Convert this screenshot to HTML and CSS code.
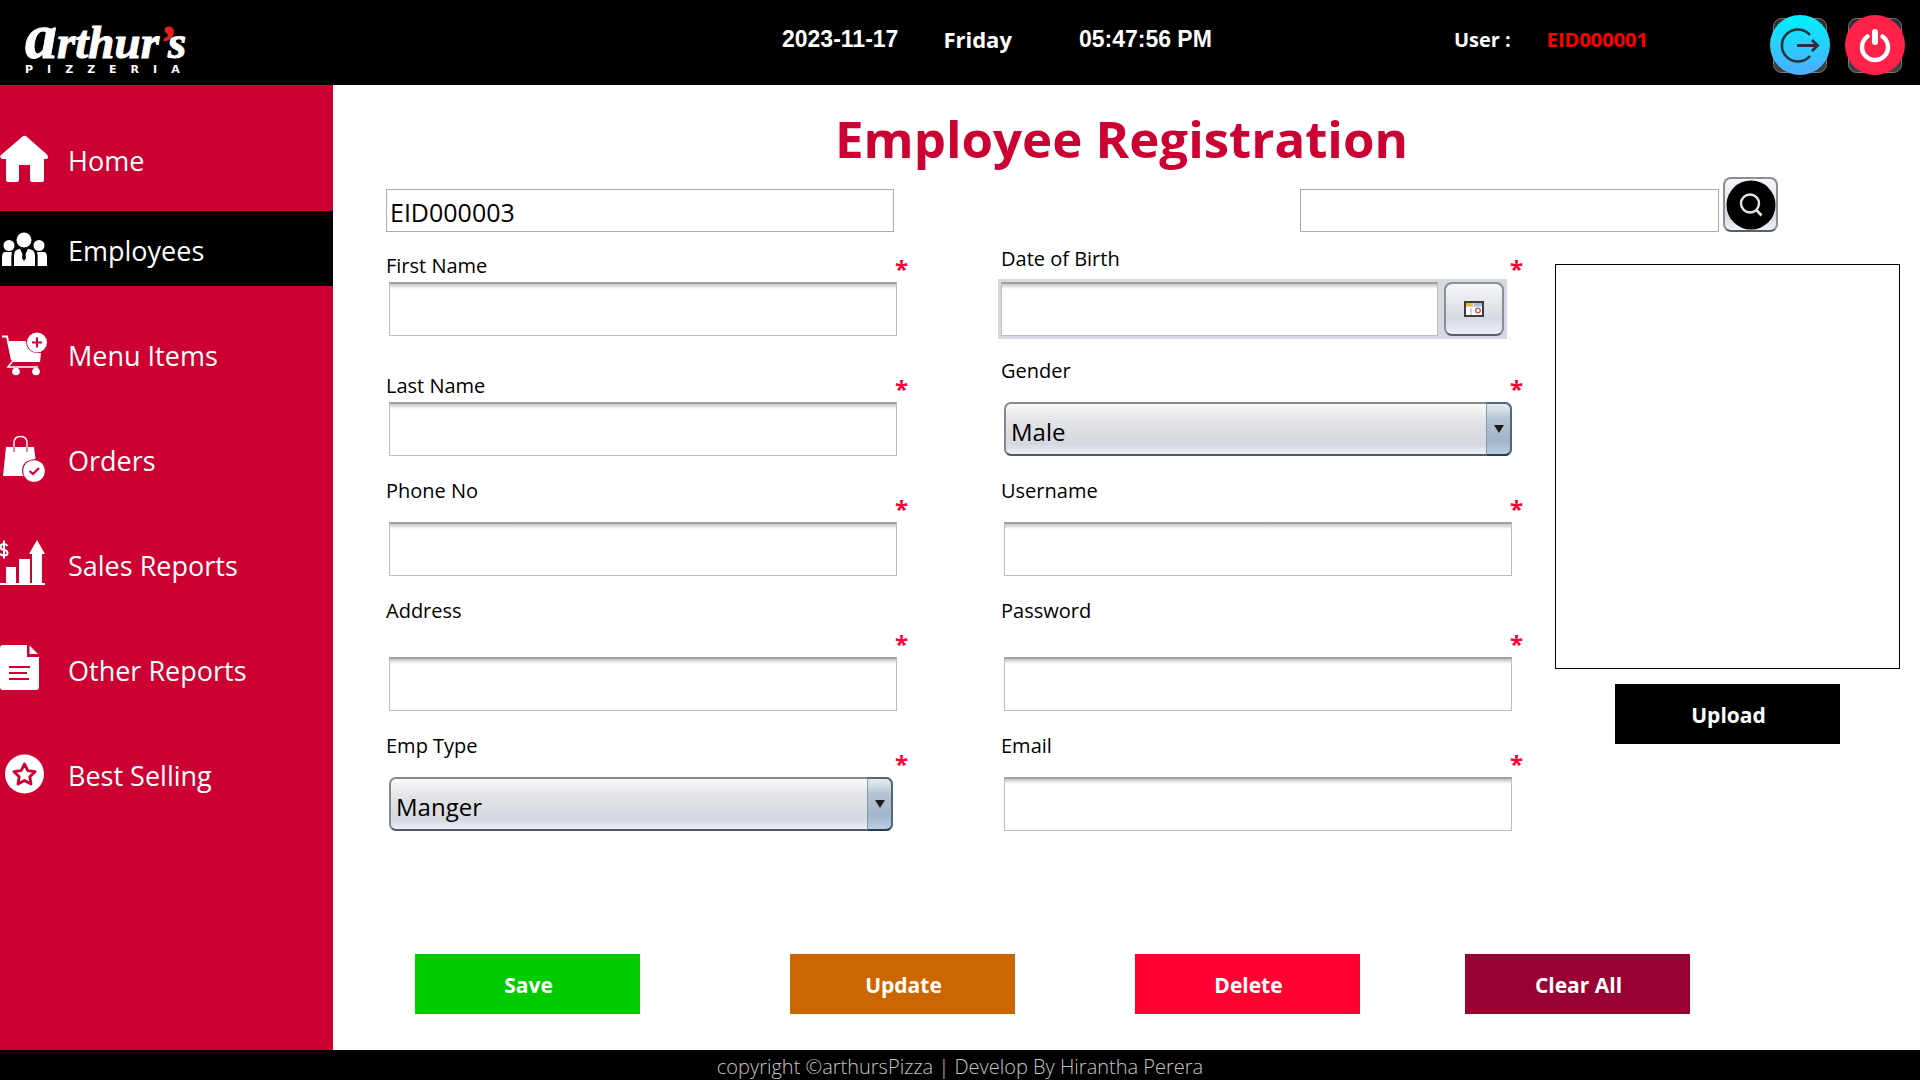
FILE: index.html
```html
<!DOCTYPE html>
<html lang="en">
<head>
<meta charset="utf-8">
<meta name="viewport" content="width=device-width, initial-scale=1">
<title>Arthur's Pizzeria - Employee Registration</title>
<link rel="stylesheet" href="styles.css">
</head>
<body>
<header class="topbar">
  <div class="logo">
    <div class="logo-name"><span class="logo-initial">a</span>rthur<span class="logo-mark">’</span>s</div>
    <div class="logo-sub">PIZZERIA</div>
  </div>
  <div class="clock">
    <span class="date">2023-11-17</span>
    <span class="day">Friday</span>
    <span class="time">05:47:56 PM</span>
  </div>
  <div class="user"><span>User :</span><span class="user-id">EID000001</span></div>
  <div class="session">
    <button class="round-btn" type="button" aria-label="Log out">
      <svg viewBox="0 0 60 60" width="60" height="60">
        <defs>
          <linearGradient id="sky" x1="0" y1="0" x2="0" y2="1"><stop offset="0" stop-color="#00f2fe"/><stop offset="1" stop-color="#4facfe"/></linearGradient>
          <linearGradient id="frame" x1="0" y1="0" x2="0" y2="1"><stop offset="0" stop-color="#2c2e31"/><stop offset="1" stop-color="#3f4144"/></linearGradient>
        </defs>
        <rect x="3.500" y="3.500" width="53" height="54" rx="8" fill="url(#frame)" stroke="#77797c"/>
        <circle cx="30" cy="30" r="30" fill="url(#sky)"/>
        <path d="M40 20A16 16 0 1 0 40 41" fill="none" stroke="#263238" stroke-width="2.600"/>
        <path d="M27 30.500H47M42 25l5.500 5.500L42 36" fill="none" stroke="#263238" stroke-width="2.800"/>
      </svg>
    </button>
    <button class="round-btn" type="button" aria-label="Exit">
      <svg viewBox="0 0 60 60" width="60" height="60">
        <rect x="3.500" y="3.500" width="53" height="54" rx="8" fill="url(#frame)" stroke="#77797c"/>
        <circle cx="30" cy="30" r="30" fill="#ff2147"/>
        <path d="M22.500 21.500A13 13 0 1 0 37.500 21.500" fill="none" stroke="#fff" stroke-width="4.500" stroke-linecap="round"/>
        <path d="M30 17V27" stroke="#fff" stroke-width="6" stroke-linecap="round"/>
      </svg>
    </button>
  </div>
</header>

<div class="layout">
  <nav class="sidebar">
    <a class="nav-item" href="#home">
      <svg viewBox="0 0 48 48" width="48" height="48" fill="#fff"><path d="M22.500 1.500Q24.500 0 26.500 1.500L47 19.500Q49 22 47 24H44V45Q44 47 42 47H32Q30 47 30 45V30H19V45Q19 47 17 47H8Q6 47 6 45V24H2Q-1 22 1 20Z"/></svg>
      <span>Home</span>
    </a>
    <a class="nav-item nav-active" href="#employees">
      <svg viewBox="0 0 48 48" width="48" height="48" fill="#fff"><circle cx="24" cy="15" r="7.500"/><circle cx="9" cy="20.500" r="5.500"/><circle cx="39" cy="20.500" r="5.500"/><path d="M14 41V31Q14 24 20 24L24 32L28 24Q35 24 35 31V41ZM2 41V33Q2 27 5 27H12Q11 30 11.500 41ZM47 41V33Q47 27 44 27H37Q38 30 37.500 41Z"/><path d="M23 25h2l1 8l-2 3l-2-3Z" fill="#000"/></svg>
      <span>Employees</span>
    </a>
    <a class="nav-item" href="#menu">
      <svg viewBox="0 0 48 48" width="48" height="48" fill="#fff"><path d="M2 6.500H7L12 30" fill="none" stroke="#fff" stroke-width="2"/><path d="M8 11H26Q26 21 36 23H41L40 32H12Z"/><path d="M12 32L8 37H38" fill="none" stroke="#fff" stroke-width="1.500"/><circle cx="16" cy="41.500" r="3.800"/><circle cx="36" cy="41.500" r="3.800"/><circle cx="37" cy="12.500" r="10"/><path d="M37 7.500V17.500M32 12.500H42" stroke="#cc0033" stroke-width="2"/></svg>
      <span>Menu Items</span>
    </a>
    <a class="nav-item" href="#orders">
      <svg viewBox="0 0 48 48" width="48" height="48" fill="#fff"><path d="M6 12H34L35.500 24Q22 25 22 36Q22 39 23.500 41H3Z"/><path d="M14 16V8Q14 1.500 20.500 1.500Q27 1.500 27 8V16" fill="none" stroke="#fff" stroke-width="1.500"/><path d="M14 12V17M27 12V17" stroke="#cc0033" stroke-width="1"/><circle cx="34" cy="36" r="10.800"/><path d="M29.500 36L33 39L39 33" fill="none" stroke="#cc0033" stroke-width="2.200"/></svg>
      <span>Orders</span>
    </a>
    <a class="nav-item" href="#sales">
      <svg viewBox="0 0 48 48" width="48" height="48" fill="#fff"><path d="M0 43H45V45H0ZM6 27H16V43H6ZM19 19H30V43H19ZM32 14H29L37 0L45 14H42V43H32Z"/><path d="M7.500 6Q6.500 4 4 4Q0.500 4 0.500 6.800Q0.500 9.500 4 10Q7.500 10.500 7.500 13Q7.500 15.500 4 15.500Q1 15.500 0 13.500M4 0.500V18.500" fill="none" stroke="#fff" stroke-width="2"/></svg>
      <span>Sales Reports</span>
    </a>
    <a class="nav-item" href="#other">
      <svg viewBox="0 0 48 48" width="48" height="48" fill="#fff"><path d="M3 0H27V12H39V42Q39 45 36 45H3Q0 45 0 42V3Q0 0 3 0Z"/><path d="M29.500 0.500L38 9H29.500Z"/><path d="M9 22H30M9 28H27M9 34H29" stroke="#cc0033" stroke-width="2"/></svg>
      <span>Other Reports</span>
    </a>
    <a class="nav-item" href="#best">
      <svg viewBox="0 0 48 48" width="48" height="48" fill="#fff"><circle cx="24.500" cy="24" r="19.500"/><path d="M24.500 14L27.800 20.600L35 21.700L29.800 26.700L31 34L24.500 30.500L18 34L19.200 26.700L14 21.700L21.200 20.600Z" fill="#fff" stroke="#cc0033" stroke-width="2.800" stroke-linejoin="round"/></svg>
      <span>Best Selling</span>
    </a>
  </nav>

  <main class="content">
    <h1 class="title">Employee Registration</h1>

    <div class="lookup">
      <input class="plain-input id-input" type="text" value="EID000003" aria-label="Employee ID">
      <div class="search">
        <input class="plain-input search-input" type="text" aria-label="Search employee">
        <button class="soft-btn search-btn" type="button" aria-label="Search">
          <svg viewBox="0 0 50 50" width="50" height="50"><circle cx="25" cy="25" r="24.500" fill="#000"/><circle cx="24" cy="23.500" r="9" fill="none" stroke="#e4e5ea" stroke-width="2.400"/><path d="M30 29.500L35.500 35.500" stroke="#e4e5ea" stroke-width="2.600"/></svg>
        </button>
      </div>
    </div>

    <div class="workspace">
      <form class="fields" id="employee">
        <div class="field">
          <div class="head"><label class="low" for="first">First Name</label><span class="star">*</span></div>
          <input class="control" id="first" type="text">
        </div>
        <div class="field">
          <div class="head"><label class="middle" for="dob">Date of Birth</label><span class="star">*</span></div>
          <div class="date-picker">
            <input class="control" id="dob" type="text">
            <button class="soft-btn calendar-btn" type="button" aria-label="Choose date">
              <svg viewBox="0 0 20 16" width="20" height="16"><rect x="1" y="1" width="18" height="14" fill="#fff" stroke="#3c3c3c" stroke-width="2"/><path d="M2 2h7v3H2z" fill="#f5b23c"/><path d="M10 2h8v3h-8z" fill="#9fc3ef"/><path d="M2 5h16v1H2zM6 7h2v7H6z" fill="#d5d5d5"/><circle cx="14" cy="9.500" r="2.300" fill="#fff" stroke="#e24a4a" stroke-width="1.300"/></svg>
            </button>
          </div>
        </div>
        <div class="field">
          <div class="head"><label class="low" for="last">Last Name</label><span class="star">*</span></div>
          <input class="control" id="last" type="text">
        </div>
        <div class="field">
          <div class="head"><label for="gender">Gender</label><span class="star">*</span></div>
          <div class="select"><select id="gender"><option>Male</option><option>Female</option></select></div>
        </div>
        <div class="field">
          <div class="head"><label for="phone">Phone No</label><span class="star">*</span></div>
          <input class="control" id="phone" type="tel">
        </div>
        <div class="field">
          <div class="head"><label for="username">Username</label><span class="star">*</span></div>
          <input class="control" id="username" type="text">
        </div>
        <div class="field">
          <div class="head tall"><label for="address">Address</label><span class="star">*</span></div>
          <input class="control" id="address" type="text">
        </div>
        <div class="field">
          <div class="head tall"><label for="password">Password</label><span class="star">*</span></div>
          <input class="control" id="password" type="password">
        </div>
        <div class="field">
          <div class="head"><label for="type">Emp Type</label><span class="star">*</span></div>
          <div class="select select-short"><select id="type"><option>Manger</option><option>Cashier</option></select></div>
        </div>
        <div class="field">
          <div class="head"><label for="email">Email</label><span class="star">*</span></div>
          <input class="control" id="email" type="email">
        </div>
      </form>
      <aside class="photo">
        <div class="photo-frame"></div>
        <button class="btn btn-upload" type="button">Upload</button>
      </aside>
    </div>

    <div class="actions">
      <button class="btn btn-save" type="submit" form="employee">Save</button>
      <button class="btn btn-update" type="button">Update</button>
      <button class="btn btn-delete" type="button">Delete</button>
      <button class="btn btn-clear" type="reset" form="employee">Clear All</button>
    </div>
  </main>
</div>
<footer class="footer">copyright ©arthursPizza | Develop By Hirantha Perera</footer>
</body>
</html>
```
FILE: styles.css
```css
*,
*::before {
  box-sizing: border-box;
}

body {
  margin: 0;
  min-height: 100vh;
  display: flex;
  flex-direction: column;
  background: #fff;
  color: #000;
  font-family: "Open Sans", "Noto Sans", sans-serif;
}

button,
input,
select {
  font-family: inherit;
  margin: 0;
}

button {
  cursor: pointer;
}

svg {
  display: block;
}

/* Top bar */
.topbar {
  display: flex;
  align-items: flex-start;
  height: 85px;
  padding: 0 15px 0 25px;
  background: #000;
  color: #fff;
  font-weight: 700;
}

.logo {
  width: 165px;
  padding-top: 12px;
}

.logo-name {
  display: flex;
  align-items: baseline;
  height: 51px;
  font: italic 700 47px/50px "Liberation Serif", serif;
  -webkit-text-stroke: 1px;
}

.logo-initial {
  font-size: 64px;
}

.logo-mark {
  width: 9px;
  color: #e8201c;
}

.logo-sub {
  font: 700 11px/14px "DejaVu Sans", sans-serif;
  letter-spacing: 14px;
  white-space: nowrap;
}

.clock {
  display: flex;
  flex: 1;
  justify-content: center;
  padding: 24px 0 0 350px;
  line-height: 30px;
  font-size: 22px;
}

.date,
.time {
  font-family: "Liberation Sans", sans-serif;
  font-size: 23px;
}

.day {
  margin: 0 67px 0 45px;
}

.user {
  display: flex;
  gap: 36px;
  padding: 25px 122px 0 0;
  font-size: 20px;
  line-height: 30px;
}

.user-id {
  color: #f00;
}

.session {
  display: flex;
  gap: 15px;
  padding-top: 15px;
}

.round-btn {
  width: 60px;
  height: 60px;
  padding: 0;
  border: 0;
  background: none;
}

/* Sidebar */
.layout {
  display: flex;
  flex: 1;
}

.sidebar {
  width: 333px;
  flex: none;
  padding-top: 36px;
  background: #cc0033;
}

.nav-item {
  display: flex;
  align-items: center;
  gap: 20px;
  height: 75px;
  margin-bottom: 30px;
  color: #fff;
  font-size: 27px;
  text-decoration: none;
}

.nav-item span {
  padding-top: 3px;
}

.nav-item:first-child {
  margin-bottom: 15px;
}

.nav-active {
  background: #000;
}

/* Content */
.content {
  flex: 1;
  min-width: 0;
  display: flex;
  flex-direction: column;
  padding: 18px 20px 36px 53px;
}

.title {
  margin: 0 43px 4px 0;
  color: #cc0033;
  font-size: 51px;
  line-height: 70px;
  font-weight: 700;
  text-align: center;
}

.lookup {
  display: flex;
  align-items: flex-end;
  gap: 406px;
  padding-right: 122px;
}

.plain-input {
  height: 43px;
  padding: 2px 3px 0;
  border: 1px solid #ababab;
  background: #fff;
  color: #000;
  font-size: 25px;
}

.id-input {
  flex: 500;
  min-width: 0;
}

.search {
  flex: 478;
  display: flex;
  align-items: flex-end;
  gap: 4px;
}

.search-input {
  flex: 1;
  min-width: 0;
}

.soft-btn {
  display: flex;
  align-items: center;
  justify-content: center;
  flex: none;
  height: 54px;
  padding: 0;
  border: 2px solid #8b8f94;
  border-bottom-color: #5c6066;
  border-radius: 8px;
  background: linear-gradient(#f6f7f9, #e2e4e8 45%, #d6d9e0 70%, #eef0fa);
}

.search-btn {
  width: 55px;
  height: 55px;
}

.calendar-btn {
  width: 60px;
}

.workspace {
  display: flex;
  gap: 32px;
  padding-top: 5px;
}

.fields {
  flex: 1;
  display: grid;
  grid-template-columns: 1fr 1fr;
  gap: 21px 93px;
}

.head {
  display: flex;
  justify-content: space-between;
  height: 45px;
  padding-bottom: 2px;
  font-size: 20px;
  line-height: 28px;
}

.tall {
  height: 60px;
}

.middle {
  align-self: center;
}

.low {
  align-self: flex-end;
}

.star {
  align-self: flex-end;
  height: 25px;
  color: #ff0033;
  font-size: 24px;
  font-weight: 700;
}

.control {
  display: block;
  width: calc(100% - 14px);
  height: 54px;
  margin-left: 3px;
  padding: 4px 6px;
  border: 1px solid #bdbdbd;
  border-top: 2px solid #a0a0a0;
  background: linear-gradient(#c4c4c4, #fff 5px);
  font-size: 23px;
}

.date-picker {
  display: flex;
  gap: 6px;
  margin-right: 19px;
  background: #d6d9e0;
  box-shadow: 0 0 0 3px #d6d9e0;
}

.date-picker .control {
  flex: 1;
  min-width: 0;
  margin: 0;
}

.select {
  position: relative;
  margin: 0 11px 0 3px;
}

.select-short {
  margin-right: 15px;
}

.select select {
  display: block;
  width: 100%;
  height: 54px;
  padding: 4px 36px 0 5px;
  appearance: none;
  border: 2px solid #85898f;
  border-bottom-color: #55595f;
  border-radius: 7px;
  background: linear-gradient(#fafafa, #e2e3e6 35%, #d5d8df 80%, #edf0f9);
  color: #000;
  font-size: 24px;
}

.select::before {
  content: "";
  position: absolute;
  top: 0;
  right: 0;
  width: 26px;
  height: 54px;
  border: 2px solid #50687f;
  border-left: 1px solid #7e99b0;
  border-bottom-color: #2c3c4d;
  border-radius: 0 7px 7px 0;
  background: linear-gradient(#e6edf2, #b3c5d3 30%, #a1b5ca 75%, #b8d0e8);
  pointer-events: none;
}

.select::after {
  content: "";
  position: absolute;
  top: 23px;
  right: 8px;
  border: 5px solid transparent;
  border-top: 8px solid #1c1c1c;
  border-bottom: 0;
  pointer-events: none;
}

.photo {
  width: 345px;
  flex: none;
  display: flex;
  flex-direction: column;
  align-items: center;
  gap: 15px;
  padding-top: 27px;
}

.photo-frame {
  width: 100%;
  height: 405px;
  border: 1px solid #000;
}

.btn {
  width: 225px;
  height: 60px;
  padding: 2px 0 0 2px;
  border: 0;
  color: #fff;
  font-size: 21px;
  font-weight: 700;
}

.btn-upload {
  background: #000;
}

.actions {
  display: flex;
  margin-top: auto;
  padding-left: 29px;
}

.btn-save {
  background: #00cc00;
}

.btn-update {
  margin-left: 150px;
  background: #cc6600;
}

.btn-delete {
  margin-left: 120px;
  background: #ff0033;
}

.btn-clear {
  margin-left: 105px;
  background: #990033;
}

.footer {
  height: 30px;
  background: #000;
  color: #c4c4c4;
  font-size: 20px;
  font-weight: 300;
  line-height: 34px;
  text-align: center;
}
```
